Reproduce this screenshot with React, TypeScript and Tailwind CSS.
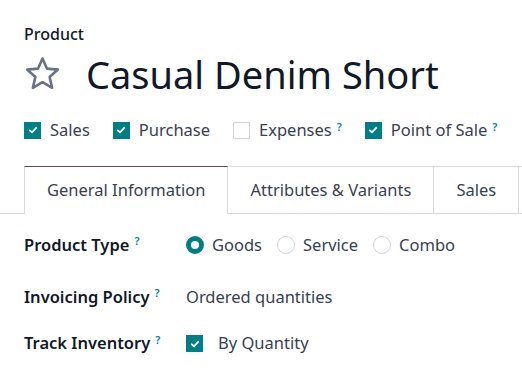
import type { ReactNode } from 'react'

const font = { fontFamily: '"Noto Sans", "Open Sans", sans-serif' }

function Check({ on }: { on: boolean }) {
  if (!on) return <span className="inline-block h-[17px] w-[17px] shrink-0 border border-[#d1d5db] bg-white" />
  return (
    <span className="flex h-[17px] w-[17px] shrink-0 items-center justify-center bg-[#017e84]">
      <svg viewBox="0 0 12 12" className="h-[10px] w-[10px]">
        <path d="M2.2 6.4 L4.8 8.8 L9.8 3.4" fill="none" stroke="white" strokeWidth="2.2" strokeLinecap="round" strokeLinejoin="round" />
      </svg>
    </span>
  )
}

function Radio({ on }: { on: boolean }) {
  return on ? (
    <span className="inline-block h-[18px] w-[18px] shrink-0 rounded-full border-[5px] border-[#017e84] bg-white" />
  ) : (
    <span className="inline-block h-[18px] w-[18px] shrink-0 rounded-full border border-[#d1d5db] bg-white" />
  )
}

function Help() {
  return <sup className="ml-[5px] text-[11px] font-semibold text-[#0180a5]">?</sup>
}

function Field({ label, className, children }: { label: string; className?: string; children: ReactNode }) {
  return (
    <div className={'flex items-center ' + (className ?? '')}>
      <div className="w-[162px] shrink-0 whitespace-nowrap text-[16.5px] font-semibold text-[#111827]">
        {label}
        <Help />
      </div>
      <div className="flex items-center whitespace-nowrap text-[16.5px] text-[#374151]">{children}</div>
    </div>
  )
}

export default function App() {
  const apps = [
    { name: 'Sales', on: true, help: false },
    { name: 'Purchase', on: true, help: false },
    { name: 'Expenses', on: false, help: true },
    { name: 'Point of Sale', on: true, help: true },
  ]
  const tabs = ['General Information', 'Attributes & Variants', 'Sales']

  return (
    <div className="h-[372px] w-[522px] overflow-hidden bg-white" style={font}>
      <div className="px-6 pt-[22px]">
        <div className="text-[16px] font-medium leading-6 text-[#111827]">Product</div>
        <div className="mt-[4px] flex items-center">
          <svg viewBox="0 0 36 36" className="h-[36px] w-[37px]">
            <path
              d="M18 2.5 L22.4 12.6 L33.4 13.6 L25.1 20.9 L27.6 31.8 L18 26.2 L8.4 31.8 L10.9 20.9 L2.6 13.6 L13.6 12.6 Z"
              fill="none"
              stroke="#6b7280"
              strokeWidth="2.6"
              strokeLinejoin="round"
            />
          </svg>
          <h1 className="ml-[25px] whitespace-nowrap text-[38px] leading-[48px] text-[#111827]">Casual Denim Short</h1>
        </div>
        <div className="mt-[20px] flex items-center gap-[23px]">
          {apps.map((a) => (
            <div key={a.name} className="flex shrink-0 items-center">
              <Check on={a.on} />
              <span className="ml-[9px] whitespace-nowrap text-[16.5px] text-[#374151]">
                {a.name}
                {a.help && <Help />}
              </span>
            </div>
          ))}
        </div>
      </div>

      <div className="mt-[23px] flex border-b border-[#d8dadd] pl-6">
        {tabs.map((t, i) => (
          <div
            key={t}
            className={
              i === 0
                ? '-mb-px h-[48px] shrink-0 whitespace-nowrap border-x border-t border-[#d8dadd] border-t-[#5d4b57] bg-white px-[22px] text-[16.5px] leading-[46px] text-[#374151]'
                : 'h-[47px] shrink-0 whitespace-nowrap border-r border-t border-[#d8dadd] px-[22px] text-[16.5px] leading-[46px] text-[#374151]'
            }
          >
            {t}
          </div>
        ))}
        <div className="h-[47px] w-[40px] shrink-0 border-t border-[#d8dadd]" />
      </div>

      <div className="flex flex-col px-6 pt-[19px]">
        <Field label="Product Type">
          <Radio on />
          <span className="ml-[8px]">Goods</span>
          <span className="ml-[15px]" />
          <Radio on={false} />
          <span className="ml-[8px]">Service</span>
          <span className="ml-[15px]" />
          <Radio on={false} />
          <span className="ml-[8px]">Combo</span>
        </Field>
        <Field label="Invoicing Policy" className="mt-[27px]">
          <span>Ordered quantities</span>
        </Field>
        <Field label="Track Inventory" className="mt-[22px]">
          <Check on />
          <span className="ml-[15px]">By Quantity</span>
        </Field>
      </div>
    </div>
  )
}
